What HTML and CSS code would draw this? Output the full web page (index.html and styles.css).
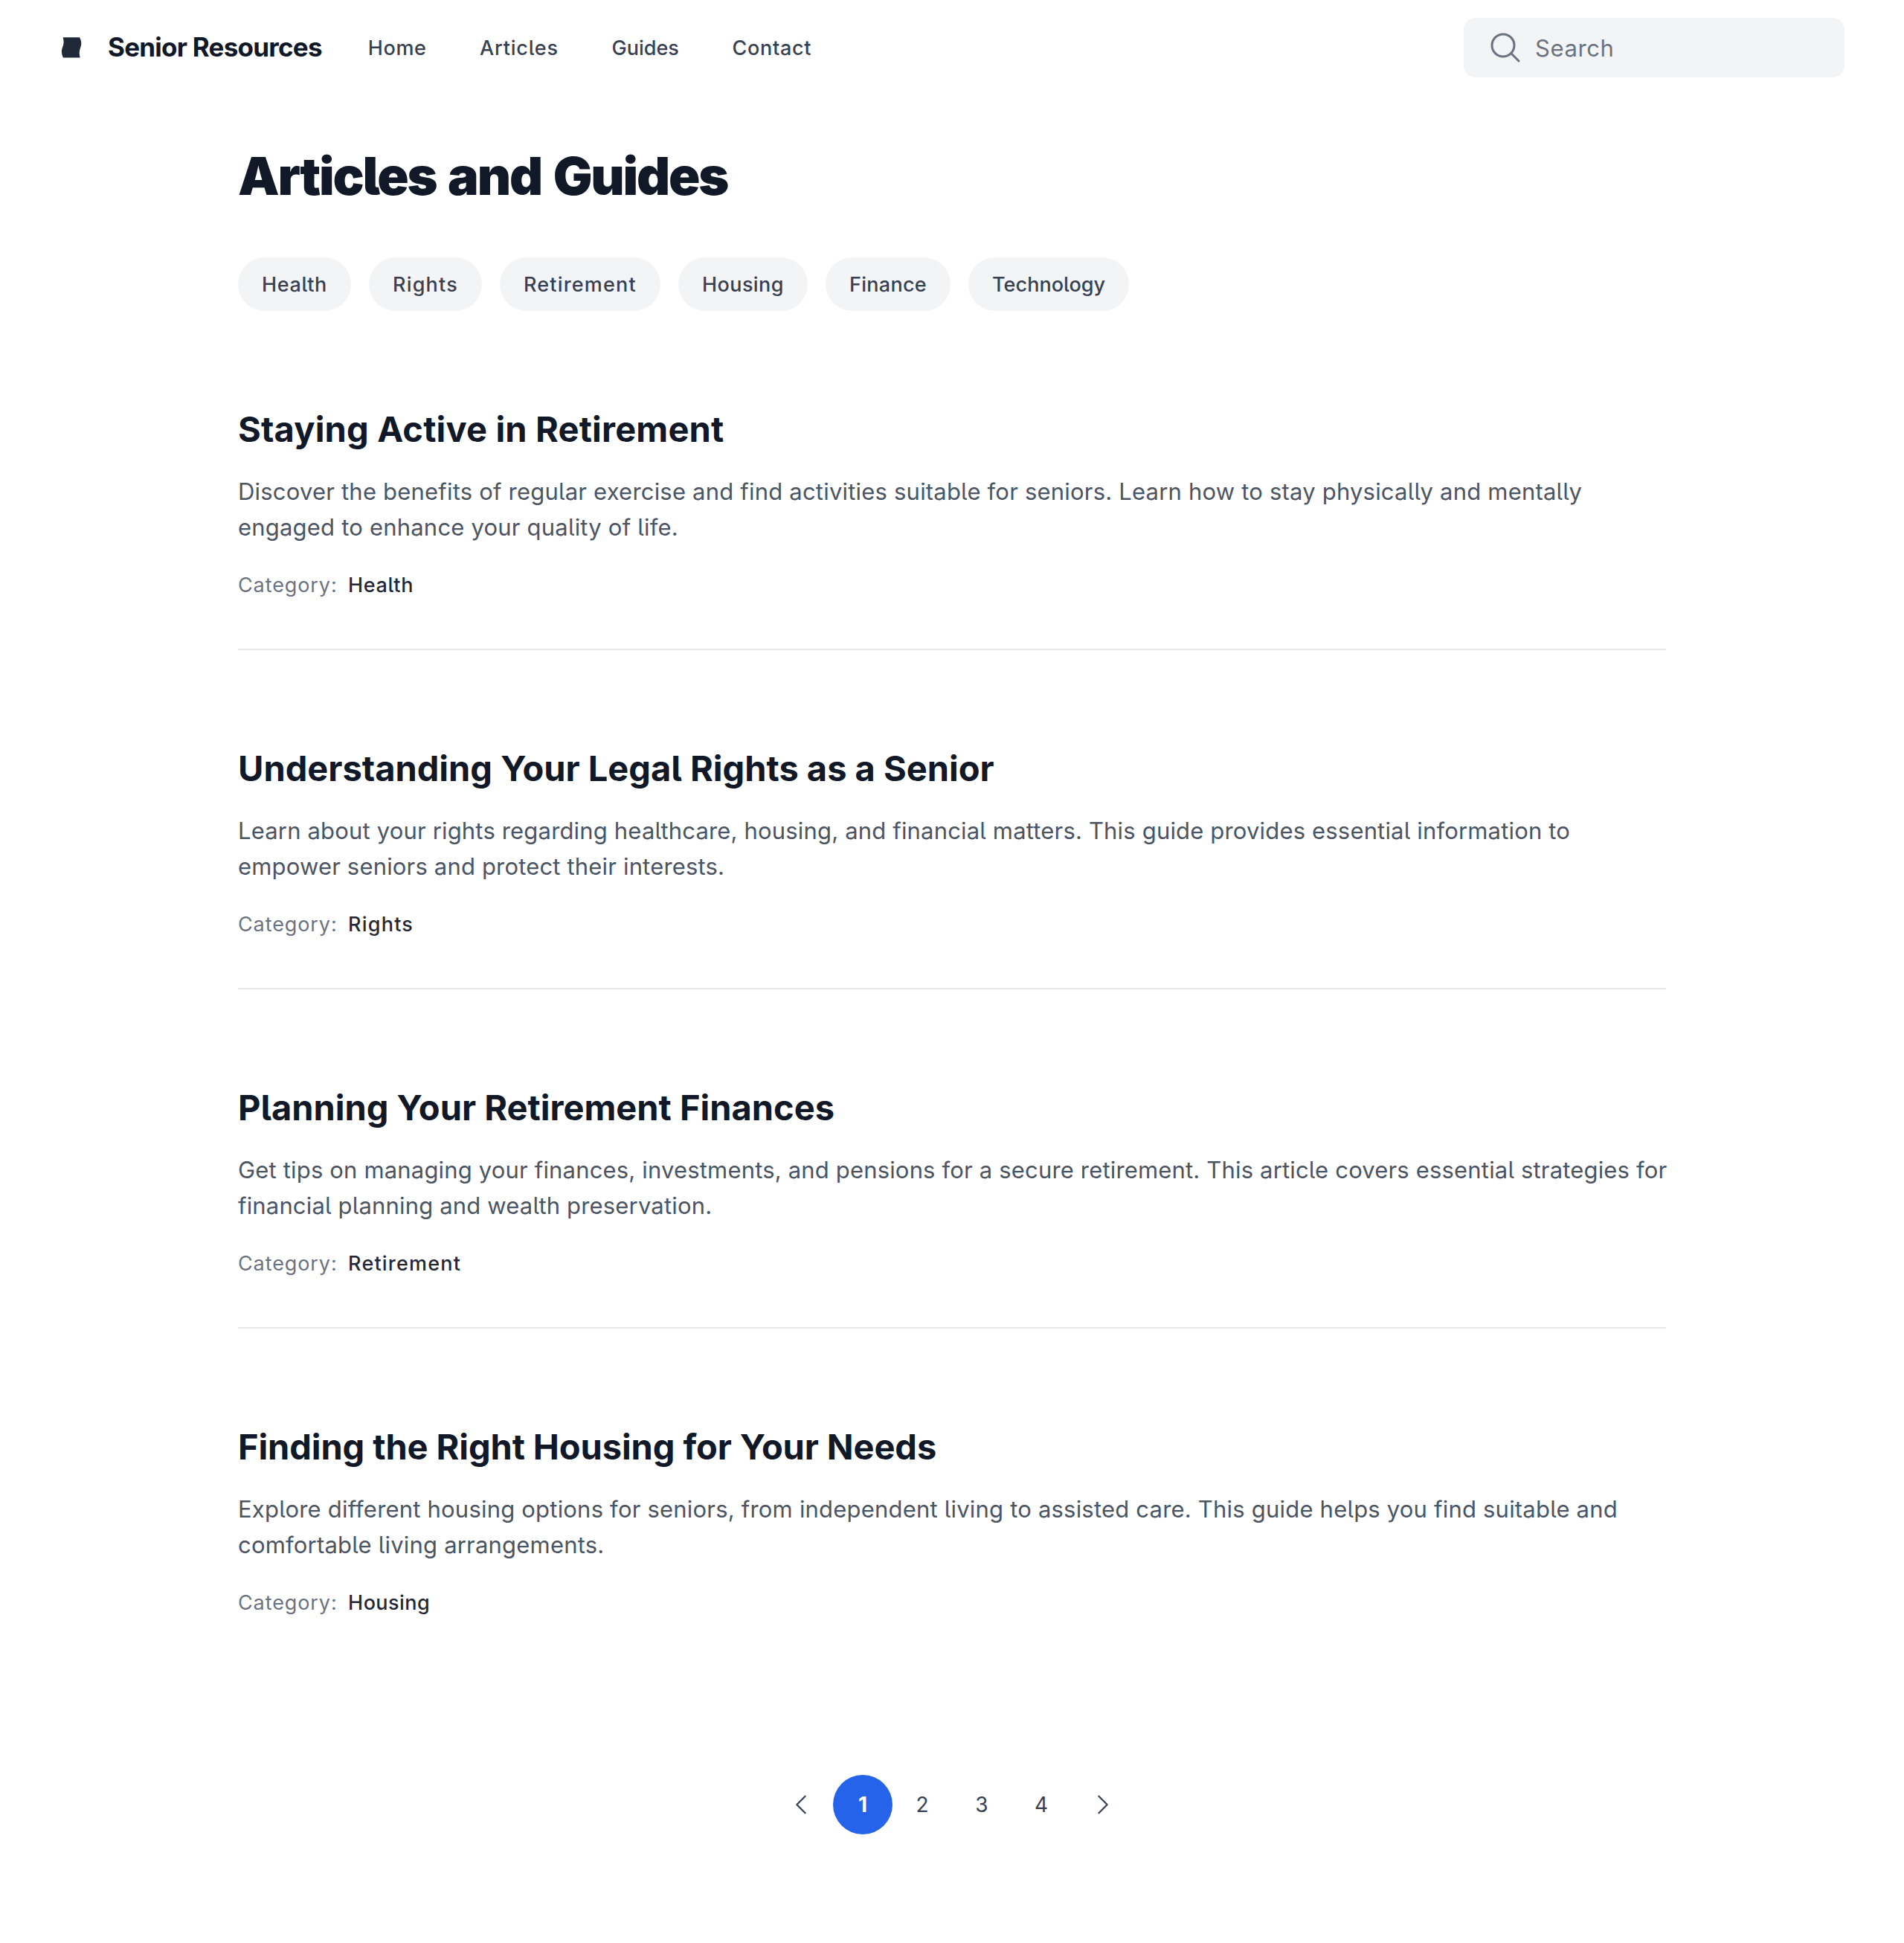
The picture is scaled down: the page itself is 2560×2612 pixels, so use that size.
FILE: index.html
```
<!DOCTYPE html>
<html lang="en">
<head>
<meta charset="utf-8">
<title>Senior Resources</title>
<link rel="stylesheet" href="styles.css">
</head>
<body>
<header class="topbar">
  <a class="brand" href="#">
    <svg class="brand-mark" viewBox="0 0 28 28"><path d="M2.7 .3H25C28 6 27.7 9.5 26.2 14C24.5 18.5 24.2 22 25.7 27.5H3C.3 22 .6 17 2.1 13.5C4 9 4 5 2.7 .3Z" fill="#1f2937"/></svg>
    <span>Senior Resources</span>
  </a>
  <nav class="nav">
    <a class="home" href="#">Home</a>
    <a class="articles" href="#">Articles</a>
    <a class="guides" href="#">Guides</a>
    <a class="contact" href="#">Contact</a>
  </nav>
  <div class="search">
    <svg viewBox="0 0 24 24"><path d="M21 21l-5.197-5.197m0 0A7.5 7.5 0 105.196 5.196a7.5 7.5 0 0010.607 10.607z"/></svg>
    <span>Search</span>
  </div>
</header>
<main class="page">
  <h1 class="title">Articles and Guides</h1>
  <div class="chips">
    <a class="health" href="#">Health</a>
    <a class="rights" href="#">Rights</a>
    <a class="retirement" href="#">Retirement</a>
    <a class="housing" href="#">Housing</a>
    <a class="finance" href="#">Finance</a>
    <a class="technology" href="#">Technology</a>
  </div>
  <article class="item">
    <h2 class="loose">Staying Active in Retirement</h2>
    <p>Discover the benefits of regular exercise and find activities suitable for seniors. Learn how to stay physically and mentally<br>engaged to enhance your quality of life.</p>
    <div class="meta"><span>Category:</span><b class="health">Health</b></div>
  </article>
  <article class="item">
    <h2>Understanding Your Legal Rights as a Senior</h2>
    <p class="snug">Learn about your rights regarding healthcare, housing, and financial matters. This guide provides essential information to<br>empower seniors and protect their interests.</p>
    <div class="meta"><span>Category:</span><b class="rights">Rights</b></div>
  </article>
  <article class="item">
    <h2>Planning Your Retirement Finances</h2>
    <p class="snug">Get tips on managing your finances, investments, and pensions for a secure retirement. This article covers essential strategies for<br>financial planning and wealth preservation.</p>
    <div class="meta"><span>Category:</span><b class="retirement">Retirement</b></div>
  </article>
  <article class="item">
    <h2 class="tight">Finding the Right Housing for Your Needs</h2>
    <p>Explore different housing options for seniors, from independent living to assisted care. This guide helps you find suitable and<br>comfortable living arrangements.</p>
    <div class="meta"><span>Category:</span><b class="housing">Housing</b></div>
  </article>
  <nav class="pager">
    <a class="arrow" href="#"><svg viewBox="0 0 24 24"><path d="M15.75 19.5L8.25 12l7.5-7.5"/></svg></a>
    <a class="current" href="#">1</a>
    <a href="#">2</a>
    <a href="#">3</a>
    <a href="#">4</a>
    <a class="arrow" href="#"><svg viewBox="0 0 24 24"><path d="M8.25 4.5l7.5 7.5-7.5 7.5"/></svg></a>
  </nav>
</main>
</body>
</html>
```
FILE: styles.css
```
* { box-sizing: border-box; }
body {
  margin: 0;
  background: #fff;
  color: #111827;
  font-family: Inter, "Liberation Sans", sans-serif;
  font-feature-settings: "cv05";
}
a { color: inherit; text-decoration: none; }

.topbar { height: 128px; padding: 0 80px; display: flex; align-items: center; }
.brand {
  display: flex;
  align-items: center;
  gap: 35px;
  margin-left: 2px;
  font-size: 35px;
  font-weight: 700;
  letter-spacing: -.75px;
}
.brand-mark { width: 28px; height: 28px; }
.brand span { padding-bottom: 2px; }
.nav {
  display: flex;
  gap: 71.7px;
  margin-left: 62px;
  font-size: 27px;
  font-weight: 450;
  color: #374151;
}
.nav .home { letter-spacing: .6px; }
.nav .articles { letter-spacing: .8px; }
.nav .contact { letter-spacing: .7px; }

.search {
  margin-left: auto;
  width: 512px;
  height: 80px;
  padding-left: 32px;
  display: flex;
  align-items: center;
  gap: 16px;
  border-radius: 16px;
  background: #f3f4f6;
  color: #6b7280;
  font-size: 31px;
  letter-spacing: .6px;
}
.search svg {
  width: 48px;
  height: 48px;
  fill: none;
  stroke: currentColor;
  stroke-width: 1.5;
  stroke-linecap: round;
  stroke-linejoin: round;
}

.page { width: 1920px; margin: 0 auto; }
.title {
  margin: 64px 0;
  font-size: 70px;
  line-height: 90px;
  font-weight: 900;
  letter-spacing: -2.2px;
  word-spacing: 4px;
}

.health { letter-spacing: .65px; }
.rights, .retirement { letter-spacing: 1.2px; }
.housing { letter-spacing: .43px; }
.finance { letter-spacing: .3px; }
.technology { letter-spacing: .05px; }

.chips {
  display: flex;
  gap: 24px;
  font-size: 27px;
  font-weight: 450;
  color: #374151;
}
.chips a {
  height: 72px;
  padding: 1px 32px 0;
  line-height: 72px;
  border-radius: 36px;
  background: #f3f4f6;
}

.item { height: 456px; padding-top: 127px; border-bottom: 2px solid #e5e7eb; }
.item:last-of-type { border-bottom: 0; }
.item h2 { margin: 0; font-size: 47px; line-height: 64px; font-weight: 700; }
.item h2.loose { letter-spacing: .17px; }
.item h2.tight { letter-spacing: -.1px; }
.item p {
  margin: 28px 0 33px;
  font-size: 31px;
  line-height: 48px;
  letter-spacing: .2px;
  color: #4b5563;
  white-space: nowrap;
}
.item p.snug { letter-spacing: .17px; }
.meta { display: flex; gap: 14.5px; font-size: 27px; line-height: 42px; color: #6b7280; }
.meta span { letter-spacing: .9px; }
.meta b { font-weight: 450; color: #1f2937; }

.pager {
  display: flex;
  justify-content: center;
  margin-top: 144px;
  font-size: 28px;
  color: #374151;
}
.pager a {
  width: 80px;
  height: 80px;
  display: flex;
  align-items: center;
  justify-content: center;
  border-radius: 50%;
}
.pager .arrow { width: 86px; }
.pager .current { background: #2563eb; color: #fff; font-weight: 700; }
.pager svg {
  width: 36px;
  height: 36px;
  fill: none;
  stroke: currentColor;
  stroke-width: 1.5;
  stroke-linecap: round;
  stroke-linejoin: round;
}
```
